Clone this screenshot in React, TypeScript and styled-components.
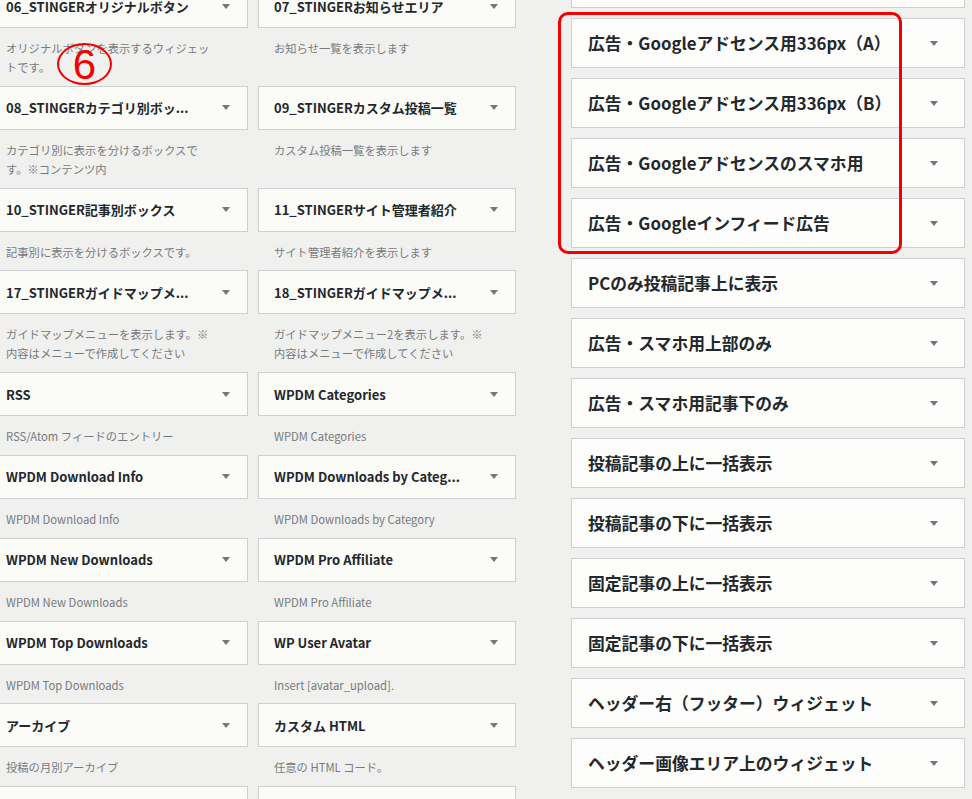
import React from "react";
import styled, { createGlobalStyle } from "styled-components";

const GlobalStyle = createGlobalStyle`
  html, body {
    margin: 0;
    padding: 0;
    background: #f0f0ee;
  }
  body {
    font-family: "Noto Sans CJK JP", "Noto Sans", sans-serif;
    overflow: hidden;
  }
`;

type Widget = { title: string; desc: string };

// descriptions keep the line breaks of the narrow widget list
const available: Widget[][] = [
  [
    { title: "06_STINGERオリジナルボタン", desc: "オリジナルボタンを表示するウィジェッ\nトです。" },
    { title: "07_STINGERお知らせエリア", desc: "お知らせ一覧を表示します" },
  ],
  [
    { title: "08_STINGERカテゴリ別ボッ...", desc: "カテゴリ別に表示を分けるボックスで\nす。※コンテンツ内" },
    { title: "09_STINGERカスタム投稿一覧", desc: "カスタム投稿一覧を表示します" },
  ],
  [
    { title: "10_STINGER記事別ボックス", desc: "記事別に表示を分けるボックスです。" },
    { title: "11_STINGERサイト管理者紹介", desc: "サイト管理者紹介を表示します" },
  ],
  [
    { title: "17_STINGERガイドマップメ...", desc: "ガイドマップメニューを表示します。※\n内容はメニューで作成してください" },
    { title: "18_STINGERガイドマップメ...", desc: "ガイドマップメニュー2を表示します。※\n内容はメニューで作成してください" },
  ],
  [
    { title: "RSS", desc: "RSS/Atom フィードのエントリー" },
    { title: "WPDM Categories", desc: "WPDM Categories" },
  ],
  [
    { title: "WPDM Download Info", desc: "WPDM Download Info" },
    { title: "WPDM Downloads by Categ...", desc: "WPDM Downloads by Category" },
  ],
  [
    { title: "WPDM New Downloads", desc: "WPDM New Downloads" },
    { title: "WPDM Pro Affiliate", desc: "WPDM Pro Affiliate" },
  ],
  [
    { title: "WPDM Top Downloads", desc: "WPDM Top Downloads" },
    { title: "WP User Avatar", desc: "Insert [avatar_upload]." },
  ],
  [
    { title: "アーカイブ", desc: "投稿の月別アーカイブ" },
    { title: "カスタム HTML", desc: "任意の HTML コード。" },
  ],
  [
    { title: "カテゴリー", desc: "カテゴリーのリストやドロップダウン" },
    { title: "カレンダー", desc: "サイトの投稿のカレンダー" },
  ],
];

const sidebar = [
  "スマホ用追加ウィジェット",
  "広告・Googleアドセンス用336px（A）",
  "広告・Googleアドセンス用336px（B）",
  "広告・Googleアドセンスのスマホ用",
  "広告・Googleインフィード広告",
  "PCのみ投稿記事上に表示",
  "広告・スマホ用上部のみ",
  "広告・スマホ用記事下のみ",
  "投稿記事の上に一括表示",
  "投稿記事の下に一括表示",
  "固定記事の上に一括表示",
  "固定記事の下に一括表示",
  "ヘッダー右（フッター）ウィジェット",
  "ヘッダー画像エリア上のウィジェット",
];

function App() {
  return (
    <>
      <GlobalStyle />
      <Page>
        <WidgetGrid>
          {available.flat().map((w, i) => (
            <WidgetItem key={i}>
              <WidgetCard>
                <WidgetTitle>{w.title}</WidgetTitle>
                <Arrow />
              </WidgetCard>
              <WidgetDesc>{w.desc}</WidgetDesc>
            </WidgetItem>
          ))}
        </WidgetGrid>

        <SidebarColumn>
          {sidebar.map((t, i) => (
            <SidebarCard key={i}>
              <SidebarTitle>{t}</SidebarTitle>
              <Arrow />
            </SidebarCard>
          ))}
          <Highlight />
        </SidebarColumn>

        <CircledNumber>
          <Digit>6</Digit>
        </CircledNumber>
      </Page>
    </>
  );
}

const Page = styled.div`
  position: relative;
  width: 972px;
  height: 799px;
  overflow: hidden;
  display: flex;
  align-items: flex-start;
`;

const WidgetGrid = styled.div`
  flex: none;
  display: grid;
  grid-template-columns: 258px 258px;
  column-gap: 10px;
  margin: -16px 0 0 -10px;
`;

const WidgetItem = styled.div`
  display: flex;
  flex-direction: column;
`;

const WidgetCard = styled.div`
  box-sizing: border-box;
  height: 44px;
  display: flex;
  align-items: center;
  justify-content: space-between;
  padding: 0 17px 0 15px;
  background: #fbfbf8;
  border: 1px solid #cdd0d3;
`;

const WidgetTitle = styled.div`
  font-size: 13px;
  font-weight: 700;
  color: #23282d;
  white-space: nowrap;
`;

const WidgetDesc = styled.div`
  padding: 11px 16px 8.8px 16px;
  font-size: 11.3px;
  line-height: 19px;
  color: #777b80;
  white-space: pre-line;
`;

const Arrow = styled.span`
  flex: none;
  width: 0;
  height: 0;
  border-left: 4px solid transparent;
  border-right: 4px solid transparent;
  border-top: 5px solid #72777c;
`;

const SidebarColumn = styled.div`
  position: relative;
  flex: none;
  width: 394px;
  margin: -42px 0 0 55px;
  display: flex;
  flex-direction: column;
  gap: 10px;
`;

const SidebarCard = styled.div`
  box-sizing: border-box;
  height: 50px;
  display: flex;
  align-items: center;
  justify-content: space-between;
  padding: 0 26px 0 16px;
  background: #fdfdfb;
  border: 1px solid #cdd0d3;
`;

const SidebarTitle = styled.div`
  font-size: 16.8px;
  font-weight: 700;
  color: #23282d;
  white-space: nowrap;
`;

const Highlight = styled.div`
  position: absolute;
  left: -13px;
  top: 54px;
  width: 344px;
  height: 242px;
  box-sizing: border-box;
  border: 3px solid #f20000;
  border-radius: 10px;
  pointer-events: none;
`;

const CircledNumber = styled.div`
  position: absolute;
  left: 57px;
  top: 43px;
  width: 55px;
  height: 42px;
  box-sizing: border-box;
  border: 2px solid #f20000;
  border-radius: 50%;
  display: flex;
  align-items: center;
  justify-content: center;
  pointer-events: none;
`;

const Digit = styled.span`
  font-family: "Liberation Sans", sans-serif;
  font-size: 42px;
  line-height: 38px;
  color: #f20000;
  transform: translateY(1px);
`;

export default App;
